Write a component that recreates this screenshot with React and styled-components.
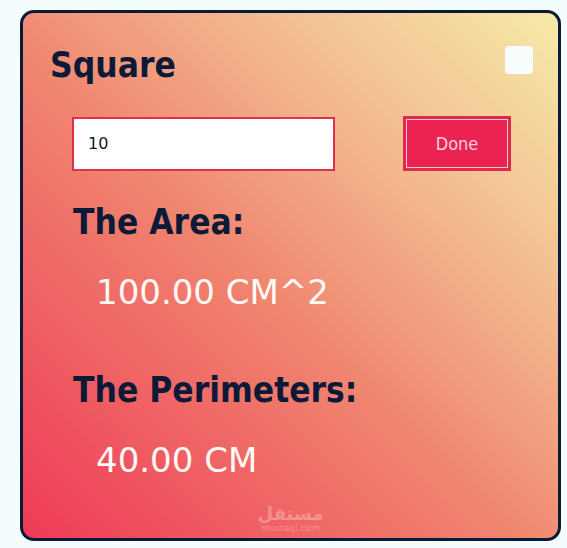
import styled, { createGlobalStyle } from 'styled-components'

const GlobalStyle = createGlobalStyle`
  html, body {
    margin: 0;
    padding: 0;
    background: #f4fdfd;
  }
  body {
    font-family: "DejaVu Sans Condensed", "DejaVu Sans", sans-serif;
  }
`

const Page = styled.div`
  padding: 10px 6px 7px 20px;
`

const Card = styled.div`
  box-sizing: border-box;
  width: 541px;
  height: 531px;
  border: 3px solid #0b1a36;
  border-radius: 14px;
  background: linear-gradient(to top right, #ef3a57 0%, #f0846f 45%, #f3c193 75%, #f6eaa9 100%);
  padding: 32px 25px 0 27px;
  display: flex;
  flex-direction: column;
  position: relative;
`

const Header = styled.div`
  display: flex;
  justify-content: space-between;
  align-items: flex-start;
`

const Title = styled.h1`
  margin: 0;
  font-size: 35px;
  font-weight: 700;
  color: #0b1a36;
  line-height: 40px;
`

const Check = styled.input`
  appearance: none;
  width: 28px;
  height: 28px;
  margin: 1px 0 0 0;
  border-radius: 4px;
  background: #f7fdfd;
  border: none;
`

const Controls = styled.div`
  display: flex;
  justify-content: space-between;
  align-items: center;
  margin: 31px 22px 0 22px;
`

const NumberInput = styled.input`
  box-sizing: border-box;
  width: 263px;
  height: 54px;
  border: 2px solid #e0304e;
  background: #fff;
  padding: 0 14px;
  font-family: "DejaVu Sans", sans-serif;
  font-size: 16px;
  color: #0b1a36;
  outline: none;
`

const DoneButton = styled.button`
  box-sizing: border-box;
  width: 108px;
  height: 55px;
  background: #ec2350;
  border: 2px solid #d92d4c;
  outline: 1px solid #f6c9d2;
  outline-offset: -4px;
  color: #f8cfdb;
  font-family: "DejaVu Sans Condensed", sans-serif;
  font-size: 18px;
`

const Section = styled.section`
  margin: ${p => p.$top}px 0 0 23px;
`

const Label = styled.h2`
  margin: 0;
  font-size: 35px;
  font-weight: 700;
  color: #0b1a36;
  line-height: 40px;
`

const Value = styled.p`
  margin: ${p => p.$top}px 0 0 23px;
  font-family: "DejaVu Sans", sans-serif;
  font-size: 34px;
  color: #fffaf6;
  line-height: 40px;
`

const Watermark = styled.div`
  position: absolute;
  left: 0;
  right: 0;
  bottom: 4px;
  text-align: center;
  color: rgba(255, 255, 255, 0.3);
  font-family: "DejaVu Sans", sans-serif;
`

const Arabic = styled.div`
  font-size: 18px;
  font-weight: 700;
  line-height: 18px;
`

const Domain = styled.div`
  font-size: 9px;
  line-height: 11px;
`

export default function App() {
  return (
    <>
      <GlobalStyle />
      <Page>
        <Card>
          <Header>
            <Title>Square</Title>
            <Check type="checkbox" />
          </Header>
          <Controls>
            <NumberInput type="text" defaultValue="10" />
            <DoneButton>Done</DoneButton>
          </Controls>
          <Section $top={31}>
            <Label>The Area:</Label>
            <Value $top={30}>100.00 CM^2</Value>
          </Section>
          <Section $top={58}>
            <Label>The Perimeters:</Label>
            <Value $top={30}>40.00 CM</Value>
          </Section>
          <Watermark>
            <Arabic>مستقل</Arabic>
            <Domain>mostaql.com</Domain>
          </Watermark>
        </Card>
      </Page>
    </>
  )
}
